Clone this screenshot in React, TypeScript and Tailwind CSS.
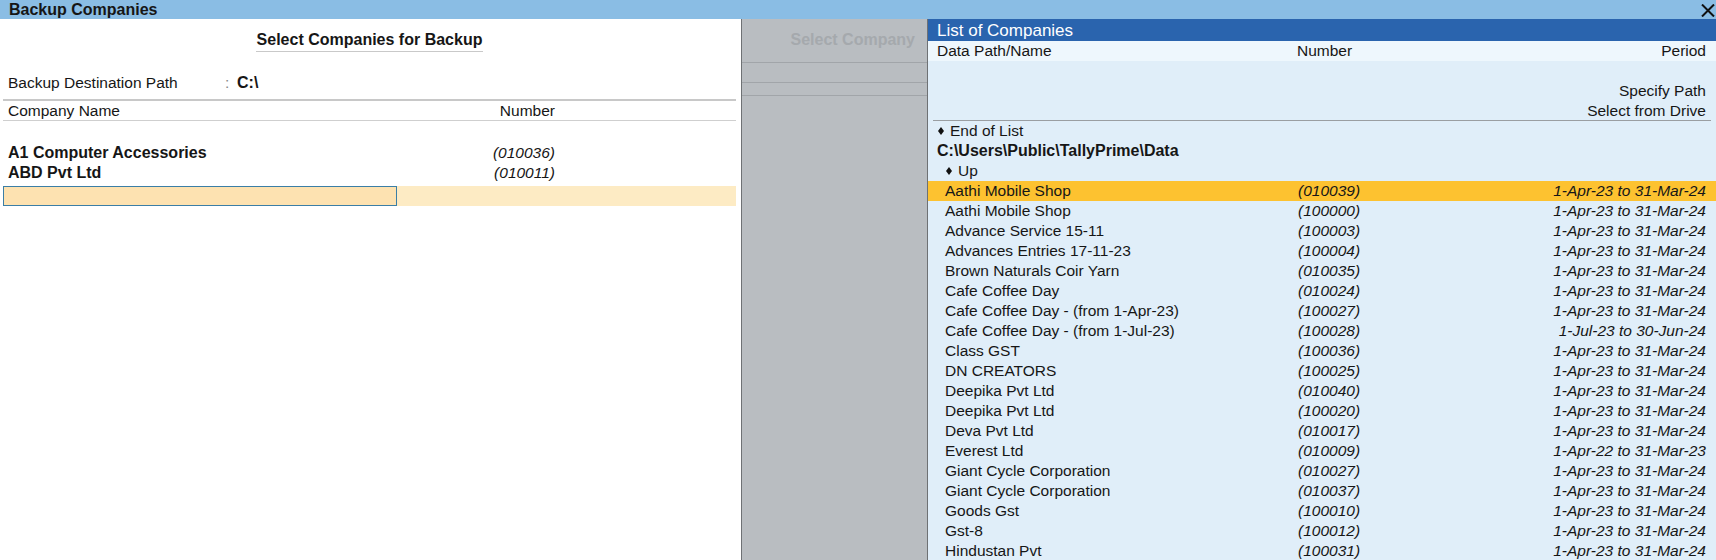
const companies = [
  { name: "Aathi Mobile Shop", num: "(010039)", period: "1-Apr-23 to 31-Mar-24" },
  { name: "Aathi Mobile Shop", num: "(100000)", period: "1-Apr-23 to 31-Mar-24" },
  { name: "Advance Service 15-11", num: "(100003)", period: "1-Apr-23 to 31-Mar-24" },
  { name: "Advances Entries 17-11-23", num: "(100004)", period: "1-Apr-23 to 31-Mar-24" },
  { name: "Brown Naturals Coir Yarn", num: "(010035)", period: "1-Apr-23 to 31-Mar-24" },
  { name: "Cafe Coffee Day", num: "(010024)", period: "1-Apr-23 to 31-Mar-24" },
  { name: "Cafe Coffee Day - (from 1-Apr-23)", num: "(100027)", period: "1-Apr-23 to 31-Mar-24" },
  { name: "Cafe Coffee Day - (from 1-Jul-23)", num: "(100028)", period: "1-Jul-23 to 30-Jun-24" },
  { name: "Class GST", num: "(100036)", period: "1-Apr-23 to 31-Mar-24" },
  { name: "DN CREATORS", num: "(100025)", period: "1-Apr-23 to 31-Mar-24" },
  { name: "Deepika Pvt Ltd", num: "(010040)", period: "1-Apr-23 to 31-Mar-24" },
  { name: "Deepika Pvt Ltd", num: "(100020)", period: "1-Apr-23 to 31-Mar-24" },
  { name: "Deva Pvt Ltd", num: "(010017)", period: "1-Apr-23 to 31-Mar-24" },
  { name: "Everest Ltd", num: "(010009)", period: "1-Apr-22 to 31-Mar-23" },
  { name: "Giant Cycle Corporation", num: "(010027)", period: "1-Apr-23 to 31-Mar-24" },
  { name: "Giant Cycle Corporation", num: "(010037)", period: "1-Apr-23 to 31-Mar-24" },
  { name: "Goods Gst", num: "(100010)", period: "1-Apr-23 to 31-Mar-24" },
  { name: "Gst-8", num: "(100012)", period: "1-Apr-23 to 31-Mar-24" },
  { name: "Hindustan Pvt", num: "(100031)", period: "1-Apr-23 to 31-Mar-24" },
];

const selected = [
  { name: "A1 Computer Accessories", num: "(010036)" },
  { name: "ABD Pvt Ltd", num: "(010011)" },
];

function Diamond() {
  return (
    <svg width="6" height="8" viewBox="0 0 6 8" className="shrink-0">
      <polygon points="3,0 6,4 3,8 0,4" fill="#111" />
    </svg>
  );
}

export default function App() {
  return (
    <div className="w-[1716px] h-[560px] overflow-hidden flex flex-col bg-white font-['Liberation_Sans',Arial,sans-serif] text-[#161616] text-[15.5px]">
      {/* title bar */}
      <div className="h-[19px] shrink-0 bg-[#8abde4] flex items-center justify-between pl-[9px] pr-[1px]">
        <span className="text-[16px] font-bold leading-none">Backup Companies</span>
        <svg width="14" height="13" viewBox="0 0 14 13" className="mt-[1px]">
          <path d="M1 0.5 L13 12.5 M13 0.5 L1 12.5" stroke="#111" strokeWidth="2" />
        </svg>
      </div>

      <div className="flex flex-1 min-h-0">
        {/* Select Companies for Backup */}
        <div className="w-[741px] shrink-0 bg-white pl-[3px] pr-[5px]">
          <div className="flex justify-center pt-[12px]">
            <span className="text-[16px] font-bold leading-[18px] border-b border-[#c9c9c9] pb-[2px] px-[1px]">
              Select Companies for Backup
            </span>
          </div>

          <div className="mt-[21px] h-[20px] flex items-center leading-[20px]">
            <span className="w-[222px] pl-[5px]">Backup Destination Path</span>
            <span className="w-[12px] text-[#888]">:</span>
            <span className="font-bold text-[16px]">C:\</span>
          </div>

          <div className="mt-[6px] border-t-2 border-[#c8c8c8]" />
          <div className="h-[20px] flex items-center leading-[20px] border-b border-[#cfcfcf]">
            <span className="w-[432px] pl-[5px]">Company Name</span>
            <span className="w-[120px] text-right">Number</span>
          </div>

          <div className="mt-[22px]">
            {selected.map((c) => (
              <div key={c.num} className="h-[20px] flex items-center leading-[20px]">
                <span className="w-[432px] pl-[5px] font-bold text-[16px]">{c.name}</span>
                <span className="w-[120px] text-right italic">{c.num}</span>
              </div>
            ))}
            <div className="mt-[3px] h-[20px] flex bg-[#fdebc4]">
              <div className="w-[394px] h-full border border-[#3b7ea6] bg-[#fde2b1]" />
            </div>
          </div>
        </div>

        {/* Select Company (disabled) */}
        <div className="w-[186px] shrink-0 bg-[#b9bdc1] border-l border-[#6e7174]">
          <div className="pt-[12px] pr-[12px] text-right text-[16px] font-bold leading-[18px] text-[#a5a9ad]">
            Select Company
          </div>
          <div className="mt-[13px] border-t border-[#a1a5a9]" />
          <div className="h-[20px] border-b border-[#a1a5a9]" />
          <div className="h-[13px] border-b border-[#a1a5a9]" />
        </div>

        {/* List of Companies */}
        <div className="flex-1 min-w-0 flex flex-col bg-[#e0eef9] border-l border-[#6e7174]">
          <div className="h-[22px] shrink-0 bg-[#2a64ae] text-white text-[17px] leading-[23px] pl-[9px]">
            List of Companies
          </div>
          <div className="h-[20px] shrink-0 bg-[#eef7fd] flex items-center leading-[20px]">
            <span className="w-[369px] pl-[9px]">Data Path/Name</span>
            <span>Number</span>
            <span className="flex-1 text-right pr-[10px]">Period</span>
          </div>

          <div className="h-[20px] shrink-0" />
          <div className="h-[20px] shrink-0 leading-[20px] text-right pr-[10px]">Specify Path</div>
          <div className="h-[19px] shrink-0 leading-[19px] text-right pr-[10px]">Select from Drive</div>
          <div className="mx-[5px] border-t border-[#9a9ea2]" />

          <div className="h-[20px] shrink-0 flex items-center gap-[6px] pl-[10px] leading-[20px]">
            <Diamond />
            <span>End of List</span>
          </div>
          <div className="h-[20px] shrink-0 pl-[9px] leading-[20px] font-bold text-[16px]">
            C:\Users\Public\TallyPrime\Data
          </div>
          <div className="h-[20px] shrink-0 flex items-center gap-[6px] pl-[18px] leading-[20px]">
            <Diamond />
            <span>Up</span>
          </div>

          {companies.map((c, i) => (
            <div
              key={c.num}
              className={
                "h-[20px] shrink-0 flex items-center leading-[20px] " +
                (i === 0 ? "bg-[#fdc230]" : "")
              }
            >
              <span className="w-[370px] pl-[17px] whitespace-nowrap">{c.name}</span>
              <span className="italic">{c.num}</span>
              <span className="flex-1 text-right pr-[10px] italic">{c.period}</span>
            </div>
          ))}
        </div>
      </div>
    </div>
  );
}
